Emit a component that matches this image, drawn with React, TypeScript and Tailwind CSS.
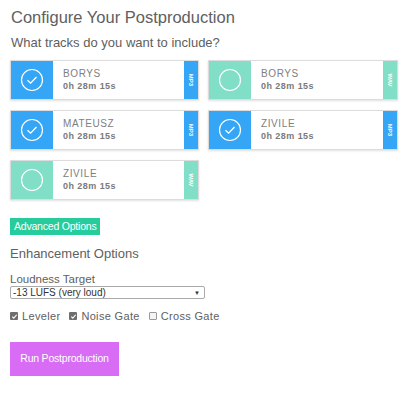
import React from 'react';

type Track = { name: string; format: 'MP3' | 'WAV'; selected: boolean };

const tracks: Track[] = [
  { name: 'BORYS', format: 'MP3', selected: true },
  { name: 'BORYS', format: 'WAV', selected: false },
  { name: 'MATEUSZ', format: 'MP3', selected: true },
  { name: 'ZIVILE', format: 'MP3', selected: true },
  { name: 'ZIVILE', format: 'WAV', selected: false },
];

const TrackCard: React.FC<{ track: Track }> = ({ track }) => {
  const color = track.selected ? 'bg-[#35a6f6]' : 'bg-[#80dfc6]';
  return (
    <div className="flex h-10 border border-[#dcdcdc] shadow-[0_1px_2px_rgba(0,0,0,0.12)] bg-white">
      <div className={`${color} w-[42px] flex items-center justify-center`}>
        <svg width="24" height="24" viewBox="0 0 24 24" fill="none">
          <circle cx="12" cy="12" r="10.5" stroke="white" strokeWidth="1.2" />
          {track.selected && (
            <path d="M7.5 12.3 L10.6 15.2 L16.5 9" stroke="white" strokeWidth="1.3" fill="none" />
          )}
        </svg>
      </div>
      <div className="flex-1 flex flex-col justify-center pl-[10px] leading-none">
        <span className="text-[10px] text-[#808080] tracking-[0.06em]">{track.name}</span>
        <span className="text-[9px] text-[#7a7a7a] font-bold tracking-[0.05em] mt-[3px]">0h 28m 15s</span>
      </div>
      <div className={`${color} w-[14px] flex items-center justify-center`}>
        <span className="rotate-90 text-[6px] text-white font-bold leading-none">{track.format}</span>
      </div>
    </div>
  );
};

const Check: React.FC<{ checked?: boolean; label: string }> = ({ checked, label }) => (
  <label className="flex items-center gap-[4px]">
    {checked ? (
      <span className="w-[8px] h-[8px] rounded-[1px] bg-[#6f6f6f] flex items-center justify-center">
        <svg width="7" height="7" viewBox="0 0 8 8" fill="none">
          <path d="M1.5 4.2 L3.2 5.8 L6.5 2" stroke="white" strokeWidth="1.3" />
        </svg>
      </span>
    ) : (
      <span className="w-[8px] h-[8px] rounded-[1px] border border-[#9a9a9a] bg-[#f4f4f4]" />
    )}
    {label}
  </label>
);

const App: React.FC = () => {
  return (
    <div className="w-[400px] h-[400px] bg-white text-[#555] px-[10px] pt-[7px] font-['Liberation_Sans',Arial,sans-serif]">
      <h1 className="text-[16.5px] leading-[20px] text-[#606060] pl-px">Configure Your Postproduction</h1>
      <h2 className="text-[13px] leading-[16px] text-[#606060] mt-[8px] pl-px">What tracks do you want to include?</h2>

      <div className="grid grid-cols-[189px_190px] gap-x-[9px] gap-y-[10px] mt-[9px]">
        {tracks.map((t, i) => (
          <TrackCard key={i} track={t} />
        ))}
      </div>

      <button className="mt-[18px] bg-[#27cc9c] text-white text-[10.5px] px-[4px] h-[17px] leading-[17px] tracking-[-0.02em]">
        Advanced Options
      </button>

      <h3 className="text-[13px] leading-[16px] text-[#606060] mt-[9px]">Enhancement Options</h3>

      <div className="mt-[10px] text-[11.5px] leading-[14px] text-[#606060]">Loudness Target</div>
      <div className="w-[195px] h-[13px] border border-[#aaa] rounded-[2px] flex items-center justify-between px-[2px] text-[10px] text-[#333] leading-none">
        <span>-13 LUFS (very loud)</span>
        <span className="text-[6px] pr-[2px]">▼</span>
      </div>

      <div className="flex items-center gap-[9px] mt-[9px] text-[11px] text-[#606060] tracking-[0.03em]">
        <Check checked label="Leveler" />
        <Check checked label="Noise Gate" />
        <Check label="Cross Gate" />
      </div>

      <button className="mt-[17px] w-[109px] h-[34px] bg-[#d86cf4] text-white text-[10.5px] tracking-[-0.02em]">
        Run Postproduction
      </button>
    </div>
  );
};

export default App;
